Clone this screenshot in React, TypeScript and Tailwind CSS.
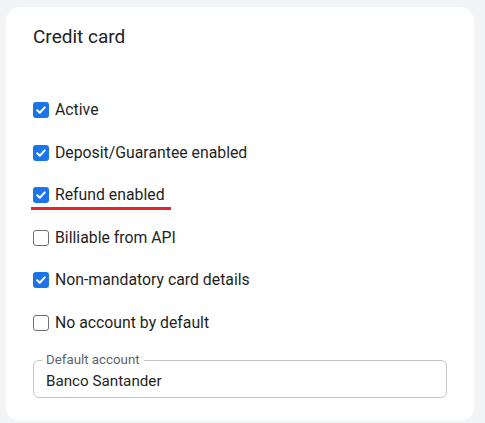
import React, { useState } from 'react';

const options = [
  { id: 'active', label: 'Active', checked: true },
  { id: 'deposit', label: 'Deposit/Guarantee enabled', checked: true },
  { id: 'refund', label: 'Refund enabled', checked: true, highlight: true },
  { id: 'api', label: 'Billiable from API', checked: false },
  { id: 'card', label: 'Non-mandatory card details', checked: true },
  { id: 'noacc', label: 'No account by default', checked: false },
];

const Box: React.FC<{ checked: boolean }> = ({ checked }) =>
  checked ? (
    <span className="flex h-[16px] w-[16px] items-center justify-center rounded-[3px] bg-[#1b74e8]">
      <svg width="12" height="12" viewBox="0 0 12 12" fill="none">
        <path d="M2.2 6.3 4.8 8.8 9.8 3.4" stroke="#fff" strokeWidth="2" strokeLinecap="round" strokeLinejoin="round" />
      </svg>
    </span>
  ) : (
    <span className="block h-[16px] w-[16px] rounded-[3px] border-[1.5px] border-[#6f6f6f] bg-white" />
  );

export default function App() {
  const [values, setValues] = useState<Record<string, boolean>>(
    Object.fromEntries(options.map((o) => [o.id, o.checked]))
  );

  return (
    <div className="h-[423px] w-[485px] bg-[#f3f4f6] pl-[6px] pr-[11px] pt-[7px] font-['Roboto',sans-serif]">
      <div className="h-[414px] rounded-[14px] bg-white pl-[27px] pr-[27px] pt-[19px]">
        <h2 className="text-[19px] leading-[22px] text-[#202124]">Credit card</h2>

        <div className="mt-[41px]">
          {options.map((o) => (
            <div key={o.id} className="relative flex h-[42.5px] items-center">
              <label className="flex cursor-pointer items-center gap-[6px]" onClick={() => setValues({ ...values, [o.id]: !values[o.id] })}>
                <Box checked={values[o.id]} />
                <span className="text-[15.8px] text-[#1f1f1f]">{o.label}</span>
              </label>
              {o.highlight && (
                <span className="absolute left-[-2px] top-[33px] h-[2.5px] w-[140px] bg-[#e3262a]" />
              )}
            </div>
          ))}
        </div>

        <fieldset className="mt-[9px] w-[414px] rounded-[6px] border border-[#c4c4c4] px-[8px] pb-[5px]">
          <legend className="px-[4px] text-[13.3px] leading-[14px] text-[#5f6368]">Default account</legend>
          <div className="pl-[4px] pt-[3px] text-[15.2px] leading-[22px] text-[#1f1f1f]">Banco Santander</div>
        </fieldset>
      </div>
    </div>
  );
}
